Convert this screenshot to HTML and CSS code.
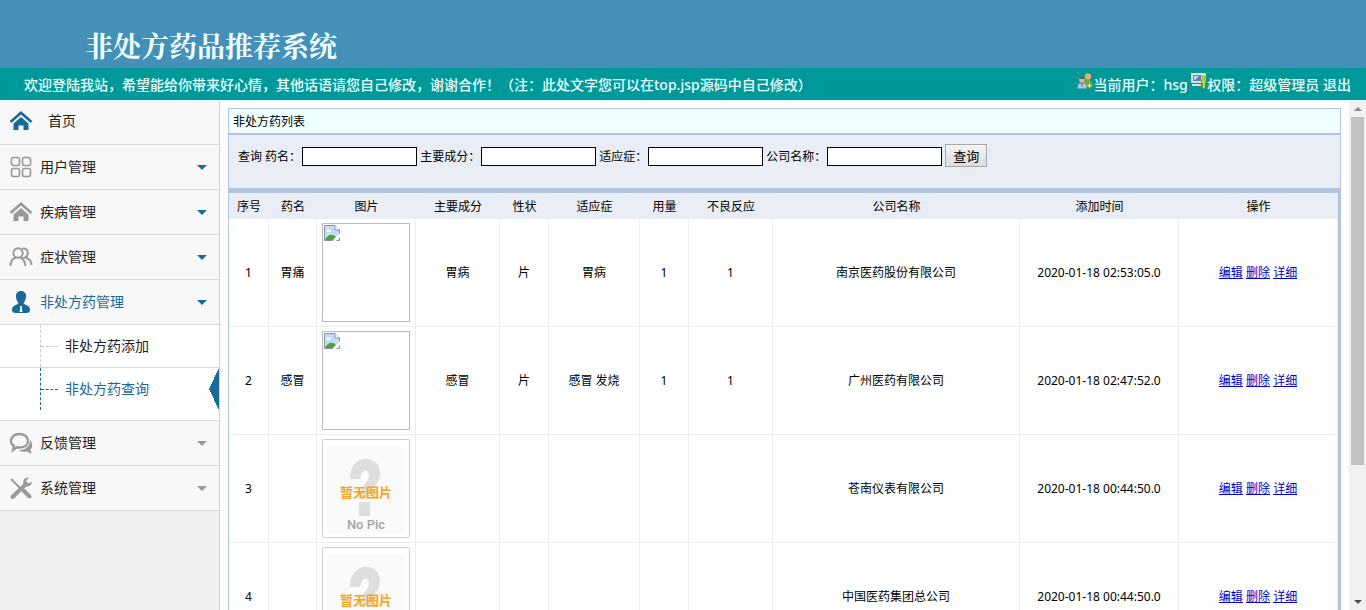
FILE: index.html
```html
<!DOCTYPE html>
<html lang="zh-CN">
<head>
  <meta charset="UTF-8">
  <meta name="viewport" content="width=device-width, initial-scale=1.0">
  <title>非处方药品推荐系统</title>
  <link rel="stylesheet" href="styles.css">
</head>
<body>
  <!-- 图标 -->
  <svg class="defs" width="0" height="0">
    <symbol id="home" viewBox="0 0 24 24">
      <path d="M1.500 13 L12 3.800 L22.500 13" fill="none" stroke="currentColor" stroke-width="2.600"/>
      <path d="M12 8 L19.500 14.500 V21 H14.500 V16.500 H9.500 V21 H4.500 V14.500 Z" fill="currentColor"/>
    </symbol>
    <symbol id="grid" viewBox="0 0 24 24">
      <g fill="none" stroke="currentColor" stroke-width="1.600">
        <rect x="2.500" y="2.500" width="8" height="8" rx="2"/>
        <rect x="13.500" y="2.500" width="8" height="8" rx="2"/>
        <rect x="2.500" y="13.500" width="8" height="8" rx="2"/>
        <rect x="13.500" y="13.500" width="8" height="8" rx="2"/>
      </g>
    </symbol>
    <symbol id="users" viewBox="0 0 24 24">
      <g fill="none" stroke="currentColor" stroke-width="1.900">
        <circle cx="9" cy="8" r="4.700"/>
        <path d="M1.500 21 C1.500 16 4 13.500 7 12.500 M11 12.500 C14 13.500 16 16 16.500 21"/>
        <path d="M13 3.800 C16 2.500 19 5 18.800 8 C18.700 10.500 17.500 12 16 12.500 C20 13.500 22.500 16 22.500 20"/>
      </g>
    </symbol>
    <symbol id="person" viewBox="0 0 24 24">
      <path d="M12 1 C15.500 1 17.500 3.500 17 7 C16.800 10 15.500 12 14.500 13 C15 15 21 15 21 19.500 C21 22 20 23 17 23 H7 C4 23 3 22 3 19.500 C3 15 9 15 9.500 13 C8.500 12 7.200 10 7 7 C6.500 3.500 8.500 1 12 1 Z" fill="currentColor"/>
      <path d="M11 16 H13 L12.700 18 L13.500 22 H10.500 L11.300 18 Z" fill="#fff"/>
    </symbol>
    <symbol id="chat" viewBox="0 0 24 24">
      <path d="M10.500 3 C15.500 3 19 6 19 10 C19 14 15.500 16.500 10.500 16.500 L8 16.300 L4 19 L5 15 C3 14 2 12 2 10 C2 6 5.500 3 10.500 3 Z" fill="none" stroke="currentColor" stroke-width="2.300"/>
      <path d="M21 9 C25 13 22.500 17.500 21.500 18.500 L22.500 23 L18 20.500 C14 21.500 11 20 10 19 C16 19.500 21 15.500 21 9 Z" fill="currentColor"/>
    </symbol>
    <symbol id="tools" viewBox="0 0 24 24">
      <path d="M2 3 L12.500 13.500" stroke="currentColor" stroke-width="1.800"/>
      <path d="M14.500 14.500 L20.500 20.500 M3.500 21 L17 8" stroke="currentColor" stroke-width="4" stroke-linecap="round"/>
      <path d="M20 1.500 C16 1 13.500 4 14.500 8 L17 10.500 C20 11 23 9 22.800 5.500 L19.500 7.500 L17 5 Z" fill="currentColor"/>
    </symbol>
    <symbol id="broken" viewBox="0 0 16 16">
      <path d="M.5 .5 H11 L15.500 5 V15.500 H.5 Z" fill="#c6dbf5" stroke="#8d9297"/>
      <path d="M11 .5 V5 H15.500" fill="#fff" stroke="#8d9297"/>
      <path d="M3 5.500 C3 4 5 4 5.500 5 C7 5 7 7 6 7 H3 C2 7 2 5.500 3 5.500 Z" fill="#fff"/>
      <path d="M1 15 C3 10 8 8 12 12 L9 15 Z" fill="#4ea33b"/>
      <path d="M16 8 L8.500 16 H12 L16 12 Z" fill="#fff"/>
    </symbol>
    <symbol id="question" viewBox="0 0 86 97">
      <rect x="4" y="7" width="78" height="86" fill="#fafafa"/>
      <path d="M27 39 C27 12 57 14 57 33 C57 47 46 45 46 57 H38 C37 45 46 43 46 35 C46 28 38 29 37 39 Z" fill="#dedede"/>
      <rect x="36" y="62" width="11" height="14" fill="#dedede"/>
    </symbol>
  </svg>

  <header class="header">
    <h1>非处方药品推荐系统</h1>
  </header>
  <div class="topbar">
    <span>欢迎登陆我站，希望能给你带来好心情，其他话语请您自己修改，谢谢合作！（注：此处文字您可以在top.jsp源码中自己修改）</span>
    <div class="user-info">
      <svg width="16" height="16" viewBox="0 0 16 16">
        <circle cx="11" cy="3.500" r="3.200" fill="#d9b36c"/>
        <path d="M6.500 14 C6.500 8 8 7 11 7 C14 7 15.500 9 15.500 14 Z" fill="#7fa04b"/>
        <circle cx="5" cy="7" r="2.800" fill="#e9b48b"/>
        <path d="M2.500 6 C2.500 3 7.500 3 7.500 6 Z" fill="#8b5030"/>
        <path d="M.5 15.500 C.5 11 2 10 5 10 C8 10 9.500 11 9.500 15.500 Z" fill="#a9c4ea"/>
        <path d="M4 10 H6 L5 14 Z" fill="#d33"/>
        <circle cx="12.500" cy="12.500" r="3" fill="#6aa53a"/>
        <path d="M12.500 10.500 V14.500 M10.500 12.500 H14.500" stroke="#fff"/>
      </svg><span>当前用户：hsg&nbsp;</span><svg width="16" height="16" viewBox="0 0 16 16">
        <rect x=".5" y=".5" width="14" height="9" fill="#e8e8e8" stroke="#cfd6dc"/>
        <rect x="2" y="2" width="8" height="6" fill="#4f87b8"/>
        <path d="M3 3 H8 L4 7 H3 Z" fill="#b8d8f0"/>
        <rect x="1" y="11" width="9" height="2" fill="#dde"/>
        <rect x="11" y="3" width="3" height="3" fill="#e6ee22" stroke="#5d7b22" stroke-width=".6"/>
        <path d="M10.500 7 H14 V15.500 H11.500 V9 H10.500 Z" fill="#e6ee22" stroke="#5d7b22" stroke-width=".6"/>
      </svg><span>权限：超级管理员</span>&nbsp;<a href="#">退出</a>
    </div>
  </div>

  <div class="main">
    <nav class="sidebar">
      <a href="#" class="menu home blue"><svg class="icon"><use href="#home"/></svg><span>首页</span></a>
      <a href="#" class="menu"><svg class="icon"><use href="#grid"/></svg><span>用户管理</span><i class="arrow open"></i></a>
      <a href="#" class="menu"><svg class="icon"><use href="#home"/></svg><span>疾病管理</span><i class="arrow open"></i></a>
      <a href="#" class="menu"><svg class="icon"><use href="#users"/></svg><span>症状管理</span><i class="arrow open"></i></a>
      <a href="#" class="menu blue current"><svg class="icon"><use href="#person"/></svg><span>非处方药管理</span><i class="arrow open"></i></a>
      <div class="submenu">
        <a href="#">非处方药添加</a>
        <a href="#" class="active">非处方药查询</a>
      </div>
      <a href="#" class="menu"><svg class="icon"><use href="#chat"/></svg><span>反馈管理</span><i class="arrow"></i></a>
      <a href="#" class="menu"><svg class="icon"><use href="#tools"/></svg><span>系统管理</span><i class="arrow"></i></a>
    </nav>

    <main class="content">
      <div class="panel">
        <div class="panel-title">非处方药列表</div>
        <form class="search">
          <label for="name">查询 药名：</label><input type="text" id="name">
          <label for="ingredient">主要成分：</label><input type="text" id="ingredient">
          <label for="indication">适应症：</label><input type="text" id="indication">
          <label for="company">公司名称：</label><input type="text" id="company">
          <button type="button">查询</button>
        </form>
        <table class="list">
          <colgroup>
            <col class="w-no"><col class="w-name"><col class="w-pic"><col class="w-m"><col class="w-s"><col class="w-l"><col class="w-s"><col class="w-m"><col><col class="w-xl"><col class="w-xl">
          </colgroup>
          <thead>
            <tr><th>序号</th><th>药名</th><th>图片</th><th>主要成分</th><th>性状</th><th>适应症</th><th>用量</th><th>不良反应</th><th>公司名称</th><th>添加时间</th><th>操作</th></tr>
          </thead>
          <tbody>
            <tr>
              <td>1</td><td>胃痛</td><td><div class="pic missing"><svg width="16" height="16"><use href="#broken"/></svg></div></td>
              <td>胃病</td><td>片</td><td>胃病</td><td>1</td><td>1</td><td>南京医药股份有限公司</td><td>2020-01-18 02:53:05.0</td>
              <td><a href="#">编辑</a> <a href="#">删除</a> <a href="#">详细</a></td>
            </tr>
            <tr>
              <td>2</td><td>感冒</td><td><div class="pic missing"><svg width="16" height="16"><use href="#broken"/></svg></div></td>
              <td>感冒</td><td>片</td><td>感冒 发烧</td><td>1</td><td>1</td><td>广州医药有限公司</td><td>2020-01-18 02:47:52.0</td>
              <td><a href="#">编辑</a> <a href="#">删除</a> <a href="#">详细</a></td>
            </tr>
            <tr>
              <td>3</td><td></td>
              <td><div class="pic"><svg width="86" height="97"><use href="#question"/><text x="43" y="57" text-anchor="middle" class="nopic-cn">暂无图片</text><text x="43" y="89" text-anchor="middle" class="nopic-en">No Pic</text></svg></div></td>
              <td></td><td></td><td></td><td></td><td></td><td>苍南仪表有限公司</td><td>2020-01-18 00:44:50.0</td>
              <td><a href="#">编辑</a> <a href="#">删除</a> <a href="#">详细</a></td>
            </tr>
            <tr>
              <td>4</td><td></td>
              <td><div class="pic"><svg width="86" height="97"><use href="#question"/><text x="43" y="57" text-anchor="middle" class="nopic-cn">暂无图片</text></svg></div></td>
              <td></td><td></td><td></td><td></td><td></td><td>中国医药集团总公司</td><td>2020-01-18 00:44:50.0</td>
              <td><a href="#">编辑</a> <a href="#">删除</a> <a href="#">详细</a></td>
            </tr>
          </tbody>
        </table>
      </div>
    </main>

    <div class="scrollbar">
      <i class="up"></i>
      <div class="track"><div class="thumb"></div></div>
      <i class="down"></i>
    </div>
  </div>
</body>
</html>
```
FILE: styles.css
```css
* { box-sizing: border-box; margin: 0; padding: 0; }
body {
  display: flex; flex-direction: column; height: 100vh; overflow: hidden;
  font-family: "Noto Sans", "Noto Sans CJK SC", sans-serif;
  font-size: 12px; line-height: 18px; color: #000; background: #fff;
}
.defs { position: absolute; }

/* 顶部 */
.header { flex: none; height: 68px; padding: 28px 0 0 85px; background: #4490b9; }
.header h1 {
  font-family: "Liberation Serif", "Noto Serif CJK SC", "Noto Sans CJK SC", serif;
  font-size: 28px; line-height: 40px; font-weight: bold; color: #f0ffff;
}
.topbar {
  flex: none; display: flex; justify-content: space-between; align-items: center;
  height: 32px; padding: 2px 15px 0 24px;
  background: #009999; color: #e8ffff; font-size: 14px; line-height: 20px; font-weight: 500;
  white-space: nowrap;
}
/* 标点居中 */
.topbar, .search label { font-family: "Noto Sans", "Noto Sans CJK TC", "Noto Sans CJK SC", sans-serif; }
.user-info { display: flex; }
.user-info svg { margin-top: -2px; }
.user-info a { color: #e8ffff; text-decoration: none; }

.main { flex: 1; display: flex; min-height: 0; border-top: 1px solid #e0ffff; }

/* 左侧菜单 */
.sidebar { flex: none; width: 220px; background: #f0f0f0; border-right: 1px solid #d2d2d2; }
.menu {
  display: flex; align-items: center; height: 45px; padding: 0 12px 0 9px;
  background: #f8f8f8; border-bottom: 1px solid #d8d8d8;
  color: #222; font-size: 14px; text-decoration: none;
}
.menu span { flex: 1; margin-left: 7px; }
.menu.home { height: 44px; padding-bottom: 3px; }
.menu.home span { margin-left: 15px; }
.menu.current { color: #19699a; }
.icon { width: 24px; height: 24px; color: #999; }
.blue .icon { color: #19699a; }
.arrow {
  border: 5px solid transparent; border-top-color: #999; border-bottom: 0;
}
.arrow.open { border-top-color: #19699a; }
.submenu {
  padding-bottom: 10px; background: #fff; border-bottom: 1px solid #d8d8d8;
}
.submenu a {
  position: relative; display: block; height: 43px; padding-left: 65px;
  border-bottom: 1px solid #d8d8d8;
  font-size: 14px; line-height: 42px; color: #222; text-decoration: none;
}
.submenu a::before {
  content: ""; position: absolute; left: 40px; top: 0; bottom: 0;
  border-left: 1px dashed #ccc;
}
.submenu a::after {
  content: ""; position: absolute; left: 41px; top: 21px; width: 17px;
  border-top: 1px dashed #ccc;
}
.submenu a.active {
  height: 42px; border-bottom: 0; color: #19699a;
  background: linear-gradient(to bottom right, transparent 50%, #19699a 50%) right top / 10px 21px no-repeat,
              linear-gradient(to top right, transparent 50%, #19699a 50%) right bottom / 10px 21px no-repeat;
}
.submenu a.active::before, .submenu a.active::after { border-color: #19699a; }

/* 列表 */
.content { flex: 1; min-width: 0; padding: 7px 8px 0; overflow: hidden; }
.panel { border: 1px solid #b0c4de; }
.panel-title {
  height: 26px; padding: 1px 4px 0; line-height: 24px;
  background: #f0ffff; border-bottom: 2px solid #b0c4de;
}
.search {
  display: flex; align-items: flex-start; gap: 3px;
  height: 58px; padding: 9px 9px 0; background: #e9eef6;
  border-bottom: 5px solid #b0c4de; white-space: nowrap;
}
.search label { margin-top: 4px; }
.search label + input { margin-left: -2px; }
.search input {
  width: 115px; height: 19px; margin-top: 3px; padding: 0 2px;
  border: 1px solid #000; background: #fff; font-size: 12px;
}
.search button {
  width: 42px; height: 23px; border: 1px solid #a8a8a8;
  background: linear-gradient(#f4f4f4, #dcdcdc);
  font-family: inherit; font-size: 13px; color: #000;
}
.list {
  width: 100%; table-layout: fixed; border-collapse: separate; border-spacing: 0;
  border-right: 2px solid #b0c4de;
}
.list th { height: 26px; padding-top: 2px; background: #e9eef6; font-weight: normal; }
.list td {
  height: 108px; text-align: center;
  border-right: 1px solid #ececec; border-bottom: 1px solid #ececec;
}
.list a { color: #0000cc; }
.w-no { width: 40px; }
.w-name { width: 48px; }
.w-s { width: 49px; }
.w-m { width: 84px; }
.w-l { width: 91px; }
.w-pic { width: 99px; }
.w-xl { width: 159px; }
.pic {
  width: 88px; height: 99px; margin: 0 auto;
  border: 1px solid #d0d0d0; border-radius: 2px;
}
.pic svg { display: block; }
.pic.missing { padding: 1px; border-color: #bbb; border-radius: 0; }
.nopic-cn { font: bold 13px "Noto Sans CJK SC", sans-serif; fill: #f5a623; }
.nopic-en { font: 500 13px Roboto, sans-serif; fill: #a5a5a5; }

/* 滚动条 */
.scrollbar {
  flex: none; display: flex; flex-direction: column; align-items: center;
  width: 17px; padding: 6px 0; background: #f1f1f1;
}
.scrollbar .up { border: 4px solid transparent; border-top: 0; border-bottom-color: #8a8a8a; }
.scrollbar .down { border: 4px solid transparent; border-bottom: 0; border-top-color: #505050; }
.track { flex: 1; width: 13px; margin: 6px 0; }
.thumb { height: 73%; background: #c1c1c1; }
```
